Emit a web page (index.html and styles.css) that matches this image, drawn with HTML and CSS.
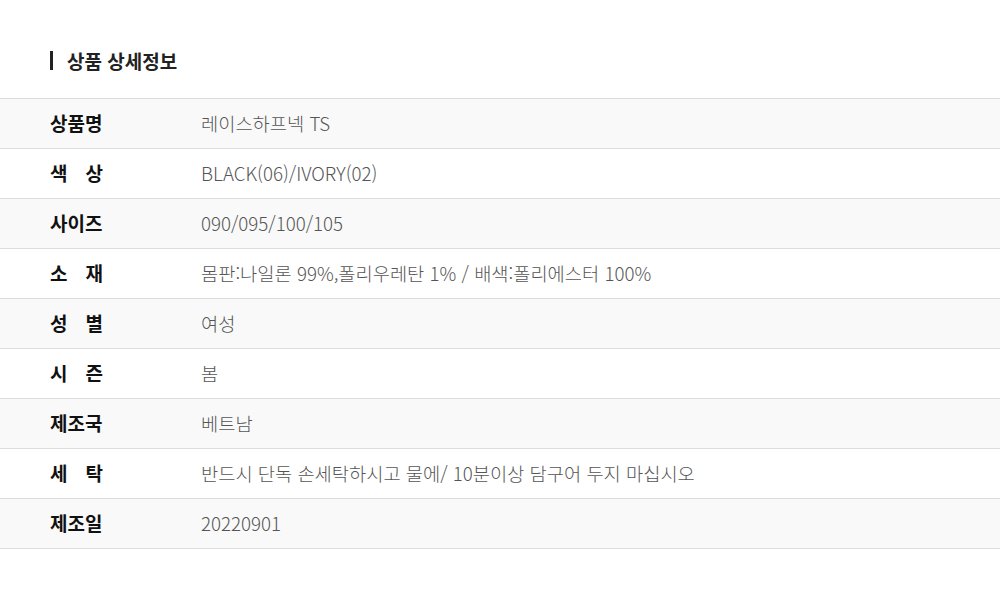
FILE: index.html
```html
<!DOCTYPE html>
<html lang="ko">
<head>
  <meta charset="UTF-8" />
  <title>상품 상세정보</title>
  <link rel="stylesheet" href="styles.css">
</head>
<body>
  <h2 class="title">상품 상세정보</h2>

  <table class="info">
    <tr><th><span>상품명</span></th><td>레이스하프넥 TS</td></tr>
    <tr><th><span>색 상</span></th><td>BLACK(06)/IVORY(02)</td></tr>
    <tr><th><span>사이즈</span></th><td>090/095/100/105</td></tr>
    <tr><th><span>소 재</span></th><td>몸판:나일론 99%,폴리우레탄 1% / 배색:폴리에스터 100%</td></tr>
    <tr><th><span>성 별</span></th><td>여성</td></tr>
    <tr><th><span>시 즌</span></th><td>봄</td></tr>
    <tr><th><span>제조국</span></th><td>베트남</td></tr>
    <tr><th><span>세 탁</span></th><td>반드시 단독 손세탁하시고 물에/ 10분이상 담구어 두지 마십시오</td></tr>
    <tr><th><span>제조일</span></th><td>20220901</td></tr>
  </table>
</body>
</html>
```

FILE: styles.css
```css
body {
  margin: 0;
  font-family: "Noto Sans CJK KR", "Noto Sans", sans-serif;
  color: #222;
  background: #fff;
}

.title {
  margin: 51px 0 0 50px;
  padding-left: 14px;
  border-left: 3px solid #222;
  font-size: 19px;
  font-weight: 700;
  line-height: 19px;
  height: 19px;
}

.info {
  width: 100%;
  margin-top: 28px;
  border-collapse: collapse;
  border-top: 1px solid #ddd;
}

.info tr {
  border-bottom: 1px solid #ddd;
}

.info tr:nth-child(odd) {
  background: #f9f9f9;
}

.info th,
.info td {
  height: 47px;
  padding: 0 0 2px;
  text-align: left;
  vertical-align: middle;
}

.info th {
  width: 151px;
  padding-left: 50px;
  font-size: 19px;
  font-weight: 700;
  color: #111;
}

.info th span {
  display: inline-block;
  width: 53px;
  text-align: justify;
  text-align-last: justify;
}

.info td {
  font-size: 18.7px;
  font-weight: 300;
  color: #555;
}
```
